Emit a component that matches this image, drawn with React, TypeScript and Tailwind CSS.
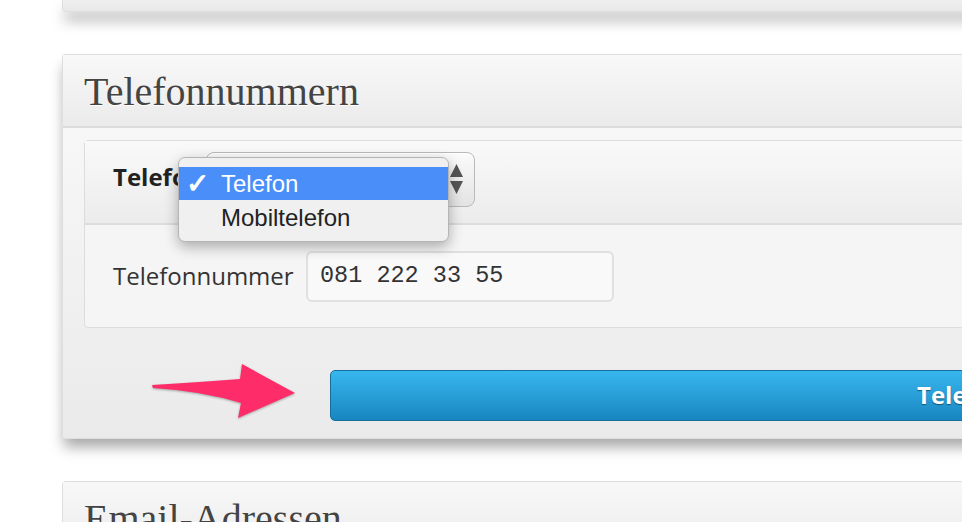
const sans = "font-['Open_Sans','Liberation_Sans',sans-serif]";
const serif = "font-['Liberation_Serif','DejaVu_Serif',serif]";

function PanelHeader({ title }: { title: string }) {
  return (
    <div className="flex h-[73px] items-center border-b-2 border-[#dcdcdc] bg-gradient-to-b from-[#f8f8f8] to-[#ebebeb] px-[21px]">
      <h2
        className={`${serif} pt-[2px] text-[40px] leading-none text-[#444] [text-shadow:0_1px_0_#fff]`}
      >
        {title}
      </h2>
    </div>
  );
}

function KindSelect() {
  return (
    <div className="relative h-[55px] w-[269px] rounded-[8px] border border-[#b9b9b9] bg-gradient-to-b from-[#fbfbfb] to-[#e3e3e3] shadow-[inset_0_1px_0_#fff]">
      <div className="absolute right-[11px] top-[11px] flex flex-col items-center gap-[4px]">
        <svg width="13" height="13" viewBox="0 0 13 13">
          <path d="M6.5 0 L13 13 L0 13 Z" fill="#555" />
        </svg>
        <svg width="13" height="13" viewBox="0 0 13 13">
          <path d="M0 0 L13 0 L6.5 13 Z" fill="#555" />
        </svg>
      </div>

      {/* open popup menu */}
      <div className="absolute left-[-29px] top-[4px] z-10 w-[271px] rounded-[7px] border border-[#b5b5b5] bg-[#f0f0f0] pb-[6px] pt-[9px] font-['Liberation_Sans',sans-serif] shadow-[0_5px_14px_rgba(0,0,0,0.3)]">
        <div className="flex h-[33px] items-center bg-[#4a8ff9] text-[24px] text-white">
          <span className="w-[42px] pl-[7px] text-[28px] font-bold leading-none">✓</span>
          <span className="leading-none">Telefon</span>
        </div>
        <div className="flex h-[35px] items-center text-[24px] text-[#222]">
          <span className="w-[42px]" />
          <span className="leading-none">Mobiltelefon</span>
        </div>
      </div>
    </div>
  );
}

export default function App() {
  return (
    <div className={`${sans} h-[522px] w-full overflow-hidden bg-white`}>
      {/* bottom of previous panel */}
      <div className="ml-[62px] h-[12px] w-[1100px] rounded-b-[3px] border border-t-0 border-[#dedede] bg-gradient-to-b from-[#efefef] to-[#e8e8e8] shadow-[0_10px_14px_-2px_rgba(0,0,0,0.35)]" />

      <section className="ml-[62px] mt-[42px] w-[1100px] rounded-[3px] border border-[#dedede] bg-[#f5f5f5] shadow-[0_10px_14px_-2px_rgba(0,0,0,0.35)]">
        <PanelHeader title="Telefonnummern" />

        <div className="bg-gradient-to-b from-[#f7f7f7] to-[#eaeaea] px-[21px] pt-[12px]">
          <div className="rounded-[4px] border border-[#dcdcdc] bg-[#f5f5f5]">
            <div className="flex h-[84px] items-start border-b-2 border-[#dcdcdc] bg-gradient-to-b from-[#f9f9f9] to-[#ececec] pl-[28px] pt-[11px]">
              <span className="w-[93px] pt-[9px] text-[24px] font-bold leading-[32px] text-[#222]">Telefon</span>
              <KindSelect />
            </div>
            <div className="flex h-[102px] items-center pl-[28px]">
              <span className="w-[193px] text-[24px] text-[#333]">Telefonnummer</span>
              <div className="flex h-[51px] w-[308px] items-center rounded-[6px] border-2 border-[#e0e0e0] bg-[#f9f9f9] pl-[12px] font-['Liberation_Mono',monospace] text-[23.5px] text-[#333]">
                081 222 33 55
              </div>
            </div>
          </div>

          <div className="flex items-center pb-[8px] pt-[32px]">
            <svg width="150" height="70" viewBox="0 0 150 70" className="ml-[66px] shrink-0 drop-shadow-[0_1px_1px_rgba(0,0,0,0.3)]">
              <path
                d="M2 25 Q52 22 90 19 L92 4 L145 33 L88 58 L91 43 Q52 31 3 28 Z"
                fill="#ff2c6a"
              />
            </svg>
            <button className="ml-[30px] h-[51px] flex-1 whitespace-nowrap rounded-[5px] border border-[#176d9c] bg-gradient-to-b from-[#38b7ef] to-[#1886c0] pl-[586px] text-left text-[24px] font-bold leading-none text-white [text-shadow:0_1px_1px_rgba(0,0,0,0.45)]">
              Telefonnummer hinzufügen
            </button>
          </div>
        </div>
      </section>

      <section className="ml-[62px] mt-[42px] w-[1100px] rounded-[3px] border border-[#dedede] bg-[#f5f5f5]">
        <PanelHeader title="Email-Adressen" />
      </section>
    </div>
  );
}
